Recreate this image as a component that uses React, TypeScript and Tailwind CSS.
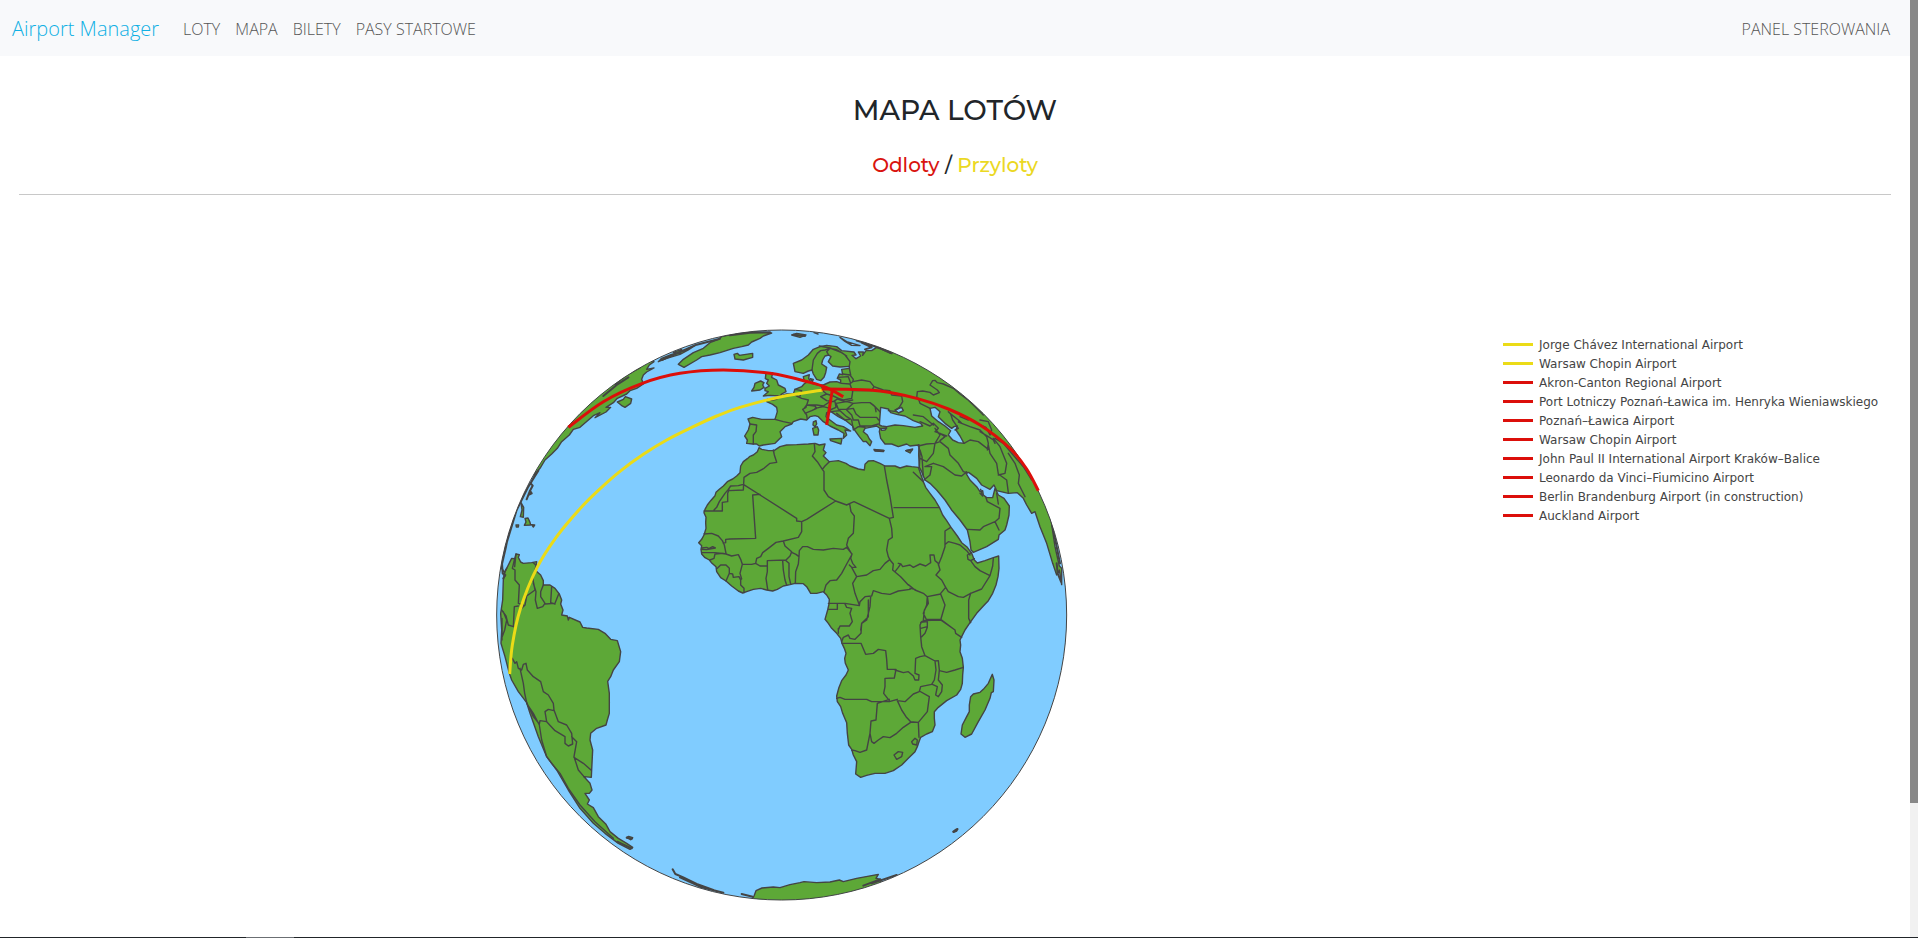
const LAND = "#5da837";
const SEA = "#80ccff";
const LINE = "#444444";
const RED = "#dc0f0a";
const YELLOW = "#ebdb17";

type Tile = [number, number, string];

/** Joins point lists, each given relative to its own tile origin, into one path. */
function path(tiles: Tile[], closed = false): string {
  const points = tiles.flatMap(([dx, dy, list]) =>
    list.trim().split(/\s+/).map((pair) => {
      const [x, y] = pair.split(",").map(Number);
      return `${x + dx} ${y + dy}`;
    }),
  );
  return `M${points.join("L")}${closed ? "Z" : ""}`;
}

/** Open lines separated by semicolons, all relative to one tile origin. */
function lines(dx: number, dy: number, list: string, closed = false): string {
  return list.split(";").map((l) => path([[dx, dy, l]], closed)).join("");
}

/** A Catmull-Rom curve through the given points. */
function route(list: string): string {
  const p = list.split(" ").map((pair) => pair.split(",").map(Number));
  let d = `M${p[0][0]} ${p[0][1]}`;
  for (let i = 0; i < p.length - 1; i++) {
    const a = p[Math.max(i - 1, 0)];
    const b = p[i];
    const c = p[i + 1];
    const e = p[Math.min(i + 2, p.length - 1)];
    d += `C${b[0] + (c[0] - a[0]) / 6} ${b[1] + (c[1] - a[1]) / 6} ${c[0] - (e[0] - b[0]) / 6} ${c[1] - (e[1] - b[1]) / 6} ${c[0]} ${c[1]}`;
  }
  return d;
}

const africa = path(
  [
    [630, 330, "207,53 202,65 190,75 180,79 172,86 160,95 152,108 150,128 140,138 128,147 112,155 100,168 88,178 78,187 75,197 62,212 52,225 45,238 42,248 48,262 47,278 48,295 42,315 35,328 26,338 35,347 33,358 35,372 45,383 58,390 66,400 78,410 80,425 92,443 108,453 125,468 145,483 158,489 172,484 190,478 212,475 230,480 248,483 262,478 280,468 300,464 315,460 340,461 350,470 362,490 380,490 400,485 410,495 418,508 417,522 413,540 405,568"],
    [960, 810, "77,90 85,100 95,115 110,130 122,145 126,160 133,175 138,190 134,205 136,220 145,240 138,255 125,272 116,295 110,318 112,335 122,350 128,370 140,398 142,430 146,465 155,478 160,495 170,515 168,540 167,552 182,562 200,556 225,550 255,550 280,542 305,525 325,505 345,485 352,470 357,455 362,442 380,432 397,425 405,405 403,385 403,365 415,352 440,332 470,315 482,298 487,280 488,255 490,232 487,205 480,185 482,165 480,150 485,140 495,120 510,98"],
    [1200, 330, "290,550 310,528 325,512 338,490 348,465 354,440 357,415 356,378 340,383 315,392 292,399 283,390 275,370 262,352 245,338 232,318 213,292 200,272 188,255 178,232 165,210 150,190 137,172 130,155 115,112 95,110 80,108 60,114 45,108 15,108"],
    [630, 330, "570,100 550,92 535,93 525,103 523,120 505,117 480,108 468,100 445,92 418,95 400,78 408,68 400,60 405,42 388,45 375,40 355,42 320,44 290,45 270,50 252,62 235,62 215,58"],
  ],
  true,
);

const eurasia = path(
  [
    [750, 0, "88,378 80,372 68,372 50,370 52,360 44,348 55,330 60,312 54,297 68,292 95,298 135,298 142,275 140,262 128,253 110,245 112,238 124,241 140,238 150,228 170,222 190,222 195,208 215,200 222,192 228,188 222,180 220,170 238,164 236,175 245,190 265,195 280,195 300,186 320,185 332,189 332,180 322,175 328,162 338,164 335,148 358,145 358,139 330,141 308,138 295,125 303,110 296,105 285,108 278,120 275,132 290,142 287,158 282,172 272,182 260,178 250,162 246,150 235,153 220,160 195,155 190,130 215,120 235,105 250,88 270,80 290,76 320,80 335,92 372,96 378,105 366,106 378,116 392,108 385,96 400,96 398,106 408,92 425,92 440,82 450,85 480,50"],
    [1200, 0, "200,40 600,500"],
    [1200, 330, "600,280 512,260 516,290 525,350 538,408 545,415 545,464 538,420 530,435 518,400 500,340 480,290 465,245 455,250 440,225 430,205 412,188 385,190 350,182 342,165 330,178 305,165 290,145 266,127 258,130 270,150 290,170 300,185 308,182 310,195 320,203 338,203 345,175 355,195 372,205 388,228 387,255 380,285 375,300 357,315 355,328 320,350 280,367 273,360 270,335 262,300 240,270 215,240 195,210 170,180 150,160 135,150 125,125 118,112 116,75 117,45"],
    [750, 0, "565,375 540,378 530,372 505,380 485,372 465,372 452,355 448,335 450,325 440,318 420,322 405,325 400,335 412,345 418,357 425,365 420,377 408,364 400,365 388,350 375,332 368,318 345,300 325,290 303,275 290,278 288,290 300,300 320,315 340,320 362,333 345,330 350,345 340,355 342,340 325,330 300,318 280,305 265,290 255,287 240,290 230,300 212,297 190,305 185,312 165,320 150,335 155,350 135,370 100,375"],
  ],
  true,
);

const southAmerica = path(
  [[0, 660, "75,95 85,75 95,55 104,56 108,42 118,44 115,52 122,66 130,70 155,68 170,65 168,78 165,90 182,105 190,122 190,135 210,135 225,145 238,162 245,180 242,192 249,210 245,225 262,228 265,240 268,232 300,246 308,262 320,264 355,268 375,280 392,298 412,302 422,335 418,365 400,390 392,410 383,424 388,460 388,520 382,540 378,555 350,565 332,580 330,600 338,630 335,690 334,712 312,710 330,730 336,750 328,760 315,760 328,780 322,792 340,803 355,830 378,853 390,875 415,895 440,910 458,922 450,928 415,910 375,880 340,850 300,805 265,750 230,690 200,650 175,590 150,520 140,488 115,455 95,420 88,400 75,350 63,310 65,270 62,220 68,180 70,120"]],
  true,
);

const northAmerica = path(
  [[0, 0, "522,125 508,135 500,148 522,144 500,156 490,165 485,178 490,192 470,205 450,212 440,222 412,235 400,248 378,262 392,262 378,276 345,293 360,278 340,287 300,322 280,328 268,345 245,365 232,385 215,402 195,420 180,445 165,462 120,480 120,300 330,80"]],
  true,
);

const greenland = lines(0, 0, "595,133 610,118 640,98 670,85 690,68 715,58 725,50 760,42 820,35 875,39 850,48 840,55 815,66 805,75 785,80 760,85 720,98 690,105 665,110 650,120 612,142", true);

const antarctica = path(
  [
    [0, 0, "812,1745 822,1728 828,1712 846,1704 880,1701 900,1703 930,1694"],
    [960, 810, "0,878 12,875 50,878 90,876 118,870 130,875 170,865 235,853 228,865 243,868 243,877 210,960 -150,960"],
  ],
  true,
);

const islands = [
  lines(960, 810, "577,253 582,270 580,305 574,308 570,325 555,360 535,395 515,432 495,442 483,432 487,405 500,380 508,365 508,345 512,320 520,312 540,307 550,298 565,280", true),
  lines(750, 0, "108,158 128,158 125,172 140,180 145,195 165,205 168,215 155,222 150,228 120,226 100,228 115,215 105,212 105,205 118,198 110,190 115,180 106,176;75,190 92,183 102,188 98,195 102,202 90,210 65,213 72,202;12,103 22,100 28,106 68,100 68,112 40,120 15,117;185,45 200,40 228,45 210,52;252,38 264,42;250,306 258,302 260,312 255,320 249,315;248,325 262,320 266,330 264,345 252,345;300,357 336,355 333,372 302,362;432,388 462,391 460,395 435,393;527,392 548,387 540,399;241,176 250,178 247,185", true),
  lines(0, 0, "412,246 430,238 436,230 455,237 452,250 435,262 424,256;535,125 545,115 575,103 610,93 645,76 625,90 600,103 560,115;580,97 605,88 600,100;123,548 131,562 130,592 121,590 126,570;135,595 144,594 150,607 152,615 133,616 138,606;108,615 116,615 115,621 109,621;155,614 164,615 160,621", true),
  lines(0, 660, "440,892 446,889 458,893 452,899", true),
  lines(960, 810, "460,725 466,719 473,716 470,723 461,727", true),
].join("");

const lakes = lines(750, 0, "448,315 452,262 475,267 482,278 500,283 525,288 550,302 572,310 578,318 555,322 520,317 495,315 470,320 455,318;495,270 515,262 520,272 505,279;452,325 470,324 465,330 455,331", true);
const caspian = lines(1200, 0, "150,265 165,262 180,275 175,290 195,310 215,325 222,320 232,318 228,330 240,348 252,370 235,368 218,360 205,345 212,332 195,318 175,305 155,288", true);

const africaBorders = [
  lines(630, 330, "250,60 253,75 260,97 240,100 222,115 200,127 180,130 162,142 160,180 117,182;160,163 145,167 122,168 115,178 105,190 88,215 80,232 72,240;117,180 113,190 113,215 97,217 97,243 42,243;160,163 320,265 320,273 335,275 350,268 437,213;210,193 188,195 197,325 120,327 107,328 107,338 100,340;42,312 65,310 85,318 97,332 103,345 108,370;35,368 75,368 108,372;35,354 50,352 56,356 68,350 76,354 50,359 35,358;75,372 72,385 60,390;75,372 100,370 108,372 125,378 145,374 152,388 157,403 150,430 155,447;82,415 92,405 108,405 118,415 118,430 108,453;118,430 128,432 130,442 147,440 152,450 152,465 162,475 162,488;157,403 185,403 197,400 210,408 230,408;197,400 200,385 212,380 218,368 235,355 258,337 280,333 285,348 305,365 300,378 288,390 232,392 232,425 228,445 233,478;278,392 280,420 285,450 290,465;288,392 297,400 297,440 302,462;305,367 318,373 327,380 325,402 317,425 316,460;335,275 335,305 325,322 280,333;327,380 328,362 338,350 352,350 370,358 400,360 430,355 460,358 470,352;373,42 375,65 367,78 382,95 397,118 402,125 402,180 415,200 437,213;397,118 405,108 418,95;437,213 470,225 480,220 492,215 598,265;479,222 483,245 493,258 490,310 475,325 470,345 485,372;470,352 480,365 486,372 482,385 488,400 498,412 485,412 478,405;485,375 470,402 455,430 440,450 420,452 408,465 402,485;485,412 500,440 488,460 495,490 508,525;500,440 530,435 550,422 570,418 585,400 600,388;583,108 590,150 600,200 610,262 598,265;612,233 748,233;598,265 605,295 607,322 595,330 590,360 595,380 600,390 610,402 608,420 632,440 655,465;615,425 625,412 632,402;415,520 465,520 508,527 510,515 525,500 545,498 550,482 575,490 600,493 625,483 660,478;415,538 442,538 442,522;465,522 470,532 485,535 480,550 487,575 478,588 450,588 445,600;542,500 540,530 530,570 515,580 512,600"),
  lines(1200, 330, "55,400 63,402 68,410 90,405 100,412 120,402 137,408 152,398 150,375 162,375 165,392 175,400;175,405 185,380 195,350 195,303 212,292;197,342 205,335 225,340 240,345 260,362 270,375;275,368 262,375 264,388 272,392 283,386;272,392 285,410 300,422 330,437;340,385 338,408 330,437 305,477 272,490;175,402 180,420 168,435 185,450 197,472 182,490;197,472 205,485 235,500 250,502 272,490;272,490 266,510 266,565 272,578;85,464 105,480 130,490 142,500 182,492 195,525 182,570 225,600;142,500 145,520 133,540 130,572 182,570;90,475 105,478;100,127 130,155"),
  lines(960, 810, "205,30 205,80 185,100 183,130 165,148 150,145 145,135 130,142 125,155;115,130 115,115;126,160 183,160 197,193 220,190 235,178 257,182 260,208 262,238 288,238 283,264 255,265 255,290 251,310 268,332;285,240 310,248 325,245 340,258 345,270 356,270 357,255 345,250 347,205 360,200 375,197 365,170 362,140 360,105 365,95 380,90 370,70 380,45 382,20;362,97 382,95 382,110 362,115;382,112 375,130 365,140;380,88 422,88 465,120 467,130 485,142;375,197 405,213 408,240 403,270 395,283 362,290 358,305 340,312 315,335 292,332;405,213 415,212 418,240 415,270 427,285 425,305 415,320 407,315 412,290 397,283;418,242 440,247 465,240 490,232;358,303 388,320 382,365 355,397 332,395 318,380 305,360 292,332;110,325 120,322 135,328 200,328 215,335 268,335 292,328;268,328 232,340 228,390 213,393 210,430 208,440 200,480 180,487 165,482 155,480;210,430 215,455 222,460 235,450 250,440 270,443 290,430 310,412 332,397 355,397 357,442"),
  lines(960, 810, "282,495 295,485 308,487 305,500 290,508;335,455 345,445 352,450 350,465 338,462", true),
].join("");

const eurasiaBorders = [
  lines(750, 0, "60,312 80,315 78,335 70,345 70,372;135,298 160,305 185,310;190,222 200,228 215,235 235,240 228,262 218,268 230,285 232,298;220,268 230,255 255,258 260,265 245,272 225,280;235,255 260,255 280,258 300,245;255,265 280,260 300,265 302,275;300,245 315,245 318,262 300,270;272,230 290,222 310,228 325,235 310,245 290,242 272,230;275,198 278,212 290,222;335,190 360,192 368,215 365,235 340,240 325,235;195,208 215,212 210,228;318,250 350,245 370,250 350,268 325,268 318,250;325,238 345,245 368,240;370,250 395,248 420,248 430,255 450,275;350,268 370,265 378,282 390,292 440,292 446,300;350,270 365,285 370,300 385,300 390,318 425,318 445,312;365,300 370,330 385,320 405,322;303,275 330,272 350,290 362,297 345,300 320,280;368,185 395,180 420,185 432,200 425,212 370,212;432,200 460,210 480,212 485,225 515,228 518,245 508,262 497,270;325,172 355,170 362,190 368,185;338,162 360,165 370,178 368,185;358,145 362,165;420,248 435,260 438,275;246,150 250,120 262,100 272,92 285,90 300,85;296,105 290,95 300,85 318,88 330,95 345,105 360,125 358,138;330,52 350,65 390,77 365,76 345,64 330,52;475,272 500,275;268,78 300,84 335,98 350,108"),
  lines(1200, 0, "110,235 112,215 128,213 150,217 160,225 178,218 172,210 150,195 158,182 165,181 172,188 190,192 220,205 240,222 262,238 290,265 310,285;115,235 120,250 140,260 150,265;205,275 212,282 218,300 235,325 225,330;235,306 245,310 270,320 300,330 320,350 325,370 322,390;210,280 235,300 245,310;240,290 265,300;300,300 325,305 335,330 330,345 318,322 304,316;300,335 325,350 340,360 345,370;340,355 360,380 380,430 375,460 355,465;325,375 330,400 350,430 355,462 380,480 385,518;385,400 405,430 418,465 415,490 425,510 435,530;345,355 370,370 395,400 430,440 455,480;165,325 180,345 165,370;120,305 150,318 160,310 175,325 165,335 200,348;100,285 130,290 160,315;252,370 270,360 295,365 325,388;180,340 195,350 180,362;180,365 205,385 210,405 235,430 250,455 262,458;115,378 140,372 165,370 180,365;165,370 160,400 140,425 120,415;120,390 126,410 130,470;160,430 135,440 155,440 150,465 132,480;160,430 190,440 225,465 245,468 260,455;116,374 120,400 118,440;0,85 32,100 20,92"),
  lines(1200, 330, "262,298 300,300 310,290 345,275 357,265 360,235 322,215 318,203;345,275 357,300;350,190 355,222;300,190 308,198 302,178"),
].join("");

const americaBorders = [
  lines(0, 660, "104,56 97,85 105,90 105,120 118,135 115,190 130,195;65,210 78,228 85,255 100,260 103,200 115,198;65,295 74,270 80,240 70,215;66,235 66,300;165,90 158,115 165,150 140,168 135,195 120,210;160,130 168,155 166,180 172,205 188,200 195,190 182,170 182,155 190,135;215,140 212,188 225,192;236,162 225,190 195,192;97,355 105,370 110,365 115,385 125,390 130,373 138,370 142,390 160,410 182,425 190,455 205,465 220,490 222,510 235,545 260,555 275,580 278,612 265,618 255,610 255,590 225,572 200,545 195,515 205,508 222,512;120,385 130,430 134,460 140,488 160,530 178,552 180,542 200,545;140,490 160,520 178,555 185,600 200,650 215,670 240,700 265,745 300,795 345,845 400,895;275,590 290,605 282,650 295,690 312,710;282,652 310,670 333,690;108,42 104,80;160,68 168,76;66,85 73,98 80,85 70,104 75,108"),
].join("");

const ruggedCoast = [
  lines(0, 0, "370,228 410,195 445,172;168,460 152,490 158,497 150,512 155,520 146,525 150,512 140,538;85,640 73,680 66,730 68,760 76,765 70,775;175,452 145,500 110,570 84,655 66,720;405,192 440,165 480,142;545,120 600,96 650,74 720,56;578,1648 586,1662 610,1672 650,1692 700,1710;600,1672 660,1700 730,1718;785,1722 818,1730"),
  lines(750, 0, "380,62 420,74 450,85 485,100;430,76 480,95;0,46 60,38 120,37;395,68 425,82 405,88;190,44 225,48;530,392 545,390;434,391 460,392"),
  lines(1200, 330, "530,400 533,430 543,455;516,280 540,400"),
  lines(960, 810, "190,887 240,868;215,880 290,855;460,725 472,718"),
  lines(0, 660, "412,905 455,925;440,893 456,896;63,85 78,20 82,0"),
].join("");

function Globe() {
  return (
    <svg viewBox="45 24 1722 1722" className="w-[574px] max-w-full" role="img" aria-label="Mapa lotów">
      <defs>
        <clipPath id="sphere">
          <circle cx="905" cy="885" r="855" />
        </clipPath>
      </defs>
      <circle cx="905" cy="885" r="855" fill={SEA} />
      <g clipPath="url(#sphere)" stroke={LINE} strokeWidth="4.2" strokeLinejoin="round" strokeLinecap="round">
        <g fill={LAND}>
          <path d={eurasia} />
          <path d={africa} />
          <path d={southAmerica} />
          <path d={northAmerica} />
          <path d={greenland} />
          <path d={antarctica} />
          <path d={islands} />
        </g>
        <path d={lakes} fill={SEA} />
        <path d={caspian} fill={SEA} />
        <g fill="none">
          <path d={africaBorders} />
          <path d={eurasiaBorders} />
          <path d={americaBorders} />
          <path d={ruggedCoast} strokeWidth="6" />
        </g>
      </g>
      <circle cx="905" cy="885" r="855" fill="none" stroke={LINE} strokeWidth="3" />
      <g fill="none" strokeWidth="9">
        <path stroke={YELLOW} d={route("89,1062 97,975 120,870 170,745 230,650 300,566 355,511 420,454 490,403 560,360 640,320 710,288 780,262 900,231 1028,210")} />
        <path stroke={RED} d={route("265,322 370,245 487,190 600,160 730,150 870,160 990,187 1040,203 1090,230")} />
        <path stroke={RED} d={route("1025,207 1100,208 1200,213 1310,235 1405,267 1500,315 1590,385 1640,447 1675,512")} />
        <path stroke={RED} d="M1057 210L1040 315" />
      </g>
    </svg>
  );
}

const arrivals = ["Jorge Chávez International Airport", "Warsaw Chopin Airport"];
const departures = [
  "Akron-Canton Regional Airport",
  "Port Lotniczy Poznań-Ławica im. Henryka Wieniawskiego",
  "Poznań–Ławica Airport",
  "Warsaw Chopin Airport",
  "John Paul II International Airport Kraków–Balice",
  "Leonardo da Vinci–Fiumicino Airport",
  "Berlin Brandenburg Airport (in construction)",
  "Auckland Airport",
];

function LegendRow({ name, line }: { name: string; line: string }) {
  return (
    <li className="flex h-[19px] items-center gap-[6px] whitespace-nowrap">
      <span className={`h-[3px] w-[30px] shrink-0 ${line}`} />
      {name}
    </li>
  );
}

const menu = ["LOTY", "MAPA", "BILETY", "PASY STARTOWE"];

export default function App() {
  return (
    <div className="flex h-screen flex-col bg-white">
      <div className="flex min-h-0 flex-1">
        <div className="min-w-0 flex-1 overflow-hidden">
          <nav className="flex h-14 items-center bg-[#f8f9fb] pt-px pr-5 pl-3 font-['Segoe_UI','Open_Sans',sans-serif] text-base text-[#555555]">
            <a href="#" className="mr-6 text-xl font-light text-[#10b0e4]">Airport Manager</a>
            <ul className="flex gap-[15px] font-light">
              {menu.map((item) => (
                <li key={item}><a href="#">{item}</a></li>
              ))}
            </ul>
            <a href="#" className="ml-auto font-light">PANEL STEROWANIA</a>
          </nav>

          <main className="mx-[19px]">
            <header className="border-b border-[#c8c8c8] pt-9 pb-[14px] text-center font-['Montserrat','Inter',sans-serif] font-medium text-[#212529]">
              <h1 className="text-[28px] leading-9">MAPA LOTÓW</h1>
              <h2 className="mt-[22px] text-xl leading-[30px]">
                <span className="text-[#d9140f]">Odloty</span> / <span className="text-[#ebd823]">Przyloty</span>
              </h2>
            </header>

            <section className="grid grid-cols-[1fr_388px] pt-[133px] pl-[42px]">
              <div className="flex justify-center">
                <Globe />
              </div>
              <ul className="pt-[7px] font-['Verdana','DejaVu_Sans',sans-serif] text-xs text-[#444444]">
                {arrivals.map((name) => (
                  <LegendRow key={name} name={name} line="bg-[#ebdb17]" />
                ))}
                {departures.map((name) => (
                  <LegendRow key={name} name={name} line="bg-[#dc0f0a]" />
                ))}
              </ul>
            </section>
          </main>
        </div>
        <div className="w-2 shrink-0 bg-[#f1f1f1]">
          <div className="h-6/7 bg-[#888888]" />
        </div>
      </div>
      <div className="h-px shrink-0 bg-[#212529] pl-[246px]">
        <div className="h-px w-12 bg-[#6b6f73]" />
      </div>
    </div>
  );
}
